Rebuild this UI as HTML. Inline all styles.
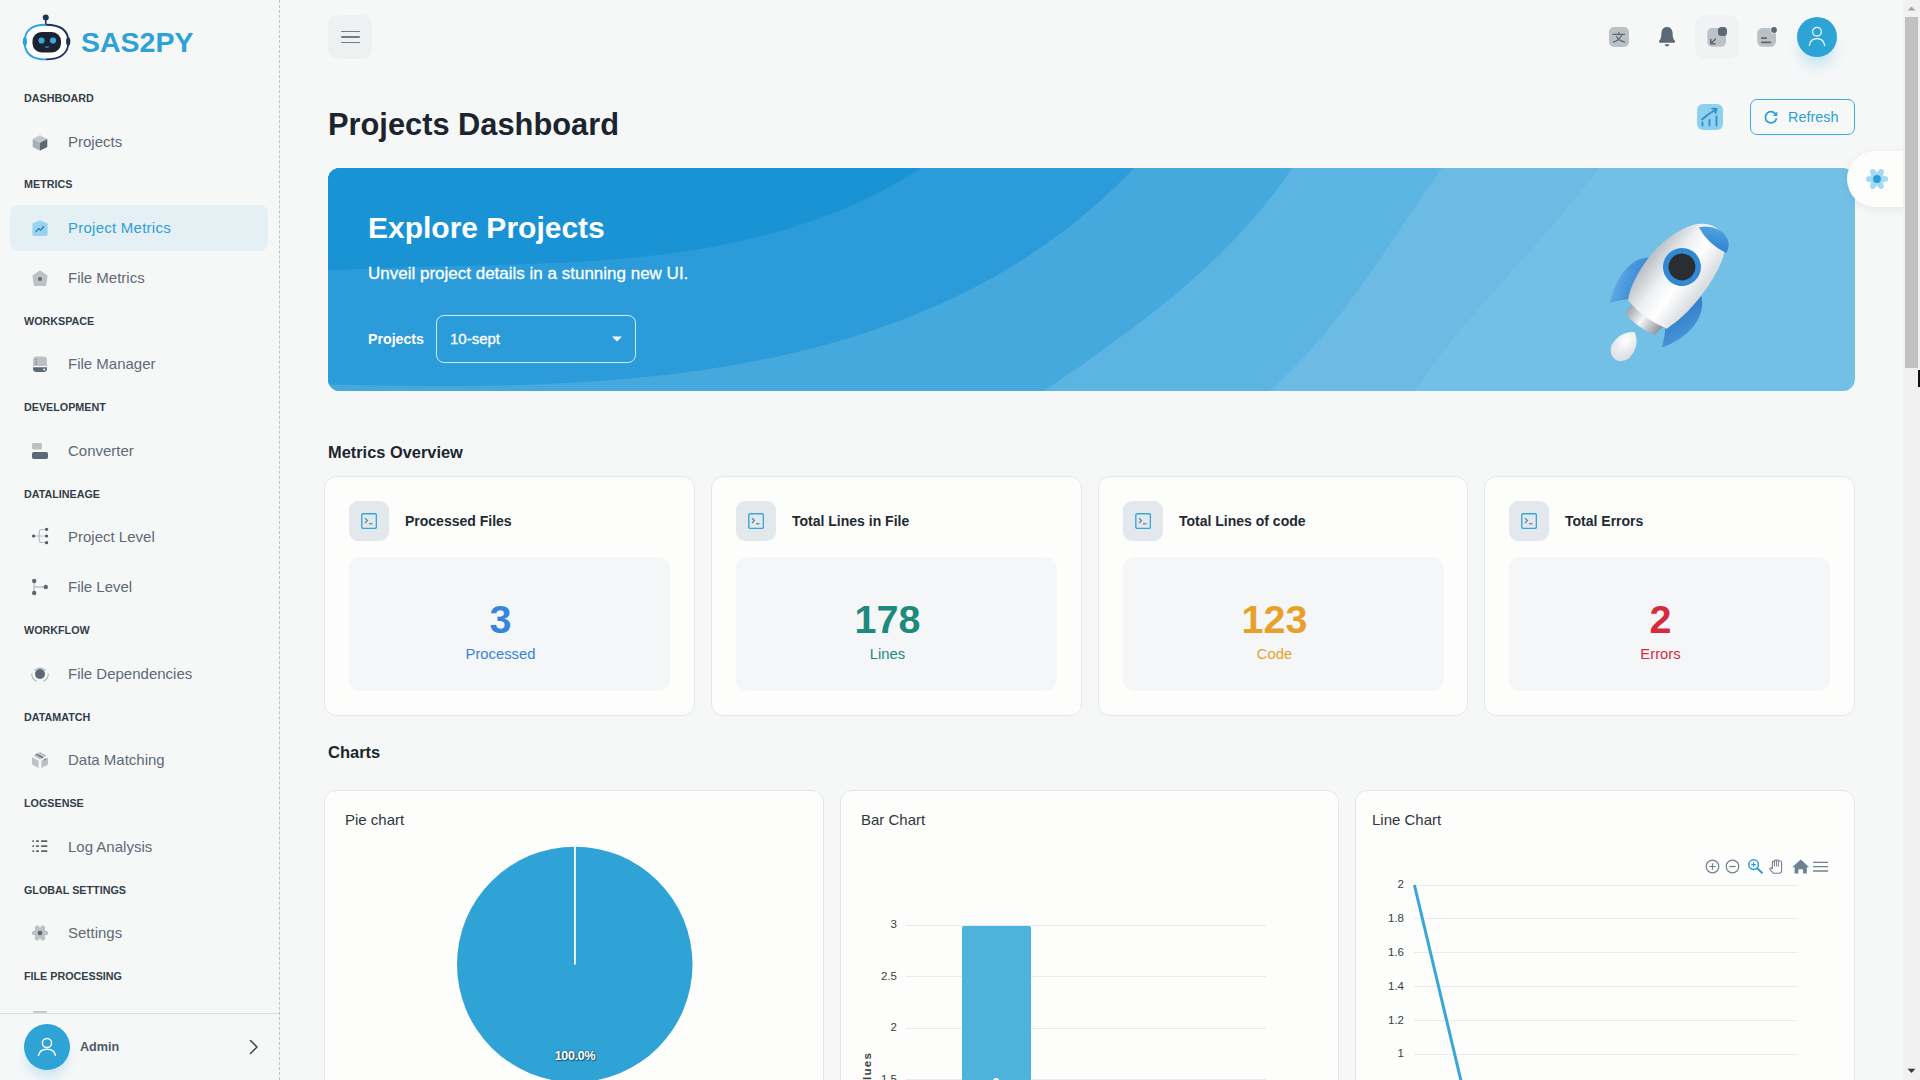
<!DOCTYPE html><html><head><meta charset="utf-8"><style>
html,body{margin:0;padding:0;width:1920px;height:1080px;overflow:hidden;background:#f6f8f8;}
body{position:relative;font-family:"Liberation Sans", sans-serif;}
.t{position:absolute;white-space:nowrap;font-family:"Liberation Sans", sans-serif;}
svg{display:block;}
</style></head><body>
<div style="position:absolute;left:0px;top:0px;width:279px;height:1080px;background:#f6f8f8;"></div>
<svg style="position:absolute;left:279px;top:0px;" width="1" height="1080" viewBox="0 0 1 1080"><line x1="0.5" y1="0" x2="0.5" y2="1080" stroke="#bfc3c6" stroke-width="1" stroke-dasharray="3 2.00930"/></svg>
<svg style="position:absolute;left:22px;top:12px;" width="50" height="52" viewBox="0 0 50 52">
<circle cx="23.75" cy="5.5" r="3" fill="#1d3358"/>
<rect x="23" y="6" width="1.5" height="7" fill="#1d3358"/>
<path d="M23.75 12.8 C 10 12.8 2.6 18 2.6 30 C 2.6 42 10 47.4 23.75 47.4 C 37.5 47.4 46.4 42 46.4 30 C 46.4 18 37.5 12.8 23.75 12.8 Z" fill="#ffffff"/>
<path d="M23.75 12.8 C 10 12.8 2.6 18 2.6 30 C 2.6 42 10 47.4 23.75 47.4" fill="none" stroke="#2aa3e0" stroke-width="1.9"/>
<path d="M23.75 12.8 C 37.5 12.8 46.4 18 46.4 30 C 46.4 42 37.5 47.4 23.75 47.4" fill="none" stroke="#1d3358" stroke-width="1.9"/>
<ellipse cx="2.9" cy="29.5" rx="2.1" ry="4.2" fill="#2aa3e0"/>
<ellipse cx="46.2" cy="29.5" rx="2.1" ry="4.2" fill="#1d3358"/>
<rect x="10.5" y="20" width="28.5" height="20.5" rx="9" fill="#1c2330"/>
<circle cx="19.5" cy="28.5" r="3.1" fill="#38a8e0"/>
<circle cx="31" cy="28.5" r="3.1" fill="#38a8e0"/>
<path d="M22.5 34.6 Q25 37 27.5 34.6 Z" fill="#38a8e0"/>
</svg>
<div class="t" style="left:81px;top:28.28px;font-size:28.5px;line-height:28.5px;color:#2ea1d6;font-weight:700;letter-spacing:0px;">SAS2PY</div>
<div class="t" style="left:24px;top:92.86px;font-size:10.75px;line-height:10.75px;color:#343e48;font-weight:700;">DASHBOARD</div>
<div class="t" style="left:24px;top:178.86px;font-size:10.75px;line-height:10.75px;color:#343e48;font-weight:700;">METRICS</div>
<div class="t" style="left:24px;top:315.86px;font-size:10.75px;line-height:10.75px;color:#343e48;font-weight:700;">WORKSPACE</div>
<div class="t" style="left:24px;top:401.86px;font-size:10.75px;line-height:10.75px;color:#343e48;font-weight:700;">DEVELOPMENT</div>
<div class="t" style="left:24px;top:488.86px;font-size:10.75px;line-height:10.75px;color:#343e48;font-weight:700;">DATALINEAGE</div>
<div class="t" style="left:24px;top:624.86px;font-size:10.75px;line-height:10.75px;color:#343e48;font-weight:700;">WORKFLOW</div>
<div class="t" style="left:24px;top:711.86px;font-size:10.75px;line-height:10.75px;color:#343e48;font-weight:700;">DATAMATCH</div>
<div class="t" style="left:24px;top:797.86px;font-size:10.75px;line-height:10.75px;color:#343e48;font-weight:700;">LOGSENSE</div>
<div class="t" style="left:24px;top:884.86px;font-size:10.75px;line-height:10.75px;color:#343e48;font-weight:700;">GLOBAL SETTINGS</div>
<div class="t" style="left:24px;top:970.86px;font-size:10.75px;line-height:10.75px;color:#343e48;font-weight:700;">FILE PROCESSING</div>
<div style="position:absolute;left:10px;top:205px;width:258px;height:46px;background:#e5f0f4;border-radius:8px;"></div>
<div class="t" style="left:68px;top:134.25px;font-size:15px;line-height:15px;color:#5e6a75;font-weight:400;">Projects</div>
<svg style="position:absolute;left:32px;top:134px;overflow:visible;" width="16" height="16" viewBox="0 0 16 16"><path d="M8 1.3 L15.3 5 L8 8.8 L0.7 5 Z" fill="#c3c7cb"/><path d="M0.7 5 L8 8.8 L8 16.7 L0.7 13 Z" fill="#a9aeb4"/><path d="M15.3 5 L8 8.8 L8 16.7 L15.3 13 Z" fill="#5b6976"/></svg>
<div class="t" style="left:68px;top:220.25px;font-size:15px;line-height:15px;color:#2e9fd4;font-weight:400;letter-spacing:0.25px;">Project Metrics</div>
<svg style="position:absolute;left:32px;top:220px;overflow:visible;" width="16" height="16" viewBox="0 0 16 16"><path d="M8 0.2 L15.6 3.5 L15.6 14 Q15.6 16 13.6 16 L2.4 16 Q0.4 16 0.4 14 L0.4 3.5 Z" fill="#9bd3ee"/><path d="M4 11.5 L6.6 8.6 L8.5 10.3 L11.5 7" fill="none" stroke="#2a86bf" stroke-width="1.4" stroke-linecap="round" stroke-linejoin="round"/><path d="M10 6.6 L12.2 6.4 L12 8.6 Z" fill="#2a86bf"/></svg>
<div class="t" style="left:68px;top:270.25px;font-size:15px;line-height:15px;color:#5e6a75;font-weight:400;">File Metrics</div>
<svg style="position:absolute;left:32px;top:270px;overflow:visible;" width="16" height="16" viewBox="0 0 16 16"><path d="M8 0.3 L15.6 5.5 L14.2 15.3 Q14 16 13.2 16 L2.8 16 Q2 16 1.8 15.3 L0.4 5.5 Z" fill="#bcc1c6"/><circle cx="8" cy="9" r="2" fill="#5b6976"/></svg>
<div class="t" style="left:68px;top:356.25px;font-size:15px;line-height:15px;color:#5e6a75;font-weight:400;">File Manager</div>
<svg style="position:absolute;left:32px;top:356px;overflow:visible;" width="16" height="16" viewBox="0 0 16 16"><path d="M1 4 Q1 0.5 4.5 0.5 L11.5 0.5 Q15 0.5 15 4 L15 10 L1 10 Z" fill="#bcc1c6"/><path d="M1 11.3 L15 11.3 L15 12.5 Q15 16 11.5 16 L4.5 16 Q1 16 1 12.5 Z" fill="#5b6976"/><circle cx="12.2" cy="13.6" r="1" fill="#f5f7f7"/><rect x="3.5" y="3.2" width="1.2" height="1" fill="#5b6976"/><rect x="3.5" y="5.2" width="1.2" height="1" fill="#5b6976"/><rect x="3.5" y="7.2" width="1.2" height="1" fill="#5b6976"/></svg>
<div class="t" style="left:68px;top:443.25px;font-size:15px;line-height:15px;color:#5e6a75;font-weight:400;">Converter</div>
<svg style="position:absolute;left:32px;top:443px;overflow:visible;" width="16" height="16" viewBox="0 0 16 16"><rect x="0" y="0" width="10" height="6.5" rx="1.6" fill="#bcc1c6"/><rect x="0" y="9" width="16" height="7" rx="1.8" fill="#5b6976"/></svg>
<div class="t" style="left:68px;top:529.25px;font-size:15px;line-height:15px;color:#5e6a75;font-weight:400;">Project Level</div>
<svg style="position:absolute;left:32px;top:529px;overflow:visible;" width="16" height="16" viewBox="0 0 16 16"><path d="M1.5 7 L14.5 7 M14.5 0.5 L9.5 0.5 Q7.3 0.5 7.3 2.7 L7.3 11.3 Q7.3 13.5 9.5 13.5 L14.5 13.5" fill="none" stroke="#b9bec3" stroke-width="1.2"/><circle cx="1.6" cy="7" r="1.6" fill="#4b5966"/><circle cx="14.6" cy="0.3" r="1.6" fill="#4b5966"/><circle cx="14.6" cy="7" r="1.6" fill="#4b5966"/><circle cx="14.6" cy="13.7" r="1.6" fill="#4b5966"/></svg>
<div class="t" style="left:68px;top:579.25px;font-size:15px;line-height:15px;color:#5e6a75;font-weight:400;">File Level</div>
<svg style="position:absolute;left:32px;top:579px;overflow:visible;" width="16" height="16" viewBox="0 0 16 16"><path d="M2 2 L2 14 M2 8 L13.8 8" fill="none" stroke="#b9bec3" stroke-width="1.3"/><circle cx="2.2" cy="2" r="2.2" fill="#5b6976"/><circle cx="2.2" cy="14" r="2.2" fill="#5b6976"/><circle cx="13.8" cy="8" r="2.2" fill="#5b6976"/></svg>
<div class="t" style="left:68px;top:666.25px;font-size:15px;line-height:15px;color:#5e6a75;font-weight:400;">File Dependencies</div>
<svg style="position:absolute;left:32px;top:666px;overflow:visible;" width="16" height="16" viewBox="0 0 16 16"><circle cx="8" cy="8" r="5" fill="#5b6976"/><path d="M2.3 4.5 A8 8 0 0 1 13.7 4.5" fill="none" stroke="#b3b8bd" stroke-width="1.1"/><path d="M-0.3 7.5 A8.3 8.3 0 0 0 4.8 15.4" fill="none" stroke="#b3b8bd" stroke-width="1.1"/><path d="M16.3 7.5 A8.3 8.3 0 0 1 11.2 15.4" fill="none" stroke="#b3b8bd" stroke-width="1.1"/></svg>
<div class="t" style="left:68px;top:752.25px;font-size:15px;line-height:15px;color:#5e6a75;font-weight:400;">Data Matching</div>
<svg style="position:absolute;left:32px;top:752px;overflow:visible;" width="16" height="16" viewBox="0 0 16 16"><path d="M8 0 L14.6 3.6 L8 7.4 L1.4 3.6 Z" fill="#bcc1c6"/><path d="M4 2 L11.2 6" stroke="#5b6976" stroke-width="1.3"/><path d="M0 5.2 L6.6 8.8 L6.6 16 L0 12.4 Z" fill="#bcc1c6"/><path d="M16 5.2 L9.4 8.8 L9.4 16 L16 12.4 Z" fill="#bcc1c6"/><path d="M12 7.2 L13.6 6.3 L13.6 7.8 L12 8.7Z" fill="#5b6976"/></svg>
<div class="t" style="left:68px;top:839.25px;font-size:15px;line-height:15px;color:#5e6a75;font-weight:400;">Log Analysis</div>
<svg style="position:absolute;left:32px;top:839px;overflow:visible;" width="16" height="16" viewBox="0 0 16 16"><g fill="#5e6368"><rect x="0.3" y="1.2" width="1.8" height="1.8" rx="0.5"/><rect x="4" y="1.2" width="3" height="1.8" rx="0.5"/><rect x="9" y="1.2" width="6.4" height="1.8" rx="0.5"/><rect x="0.3" y="6.2" width="1.8" height="1.8" rx="0.5"/><rect x="4" y="6.2" width="3" height="1.8" rx="0.5"/><rect x="9" y="6.2" width="6.4" height="1.8" rx="0.5"/><rect x="0.3" y="11.2" width="1.8" height="1.8" rx="0.5"/><rect x="4" y="11.2" width="3" height="1.8" rx="0.5"/><rect x="9" y="11.2" width="6.4" height="1.8" rx="0.5"/></g></svg>
<div class="t" style="left:68px;top:925.25px;font-size:15px;line-height:15px;color:#5e6a75;font-weight:400;">Settings</div>
<svg style="position:absolute;left:32px;top:925px;overflow:visible;" width="16" height="16" viewBox="0 0 16 16"><circle cx="8" cy="8" r="5.7" fill="#bcc1c6"/><rect x="-0.1999999999999993" y="5.65" width="16.4" height="4.7" rx="2.1363636363636362" fill="#bcc1c6" transform="rotate(0 8 8)"/><rect x="-0.1999999999999993" y="5.65" width="16.4" height="4.7" rx="2.1363636363636362" fill="#bcc1c6" transform="rotate(60 8 8)"/><rect x="-0.1999999999999993" y="5.65" width="16.4" height="4.7" rx="2.1363636363636362" fill="#bcc1c6" transform="rotate(120 8 8)"/><circle cx="8" cy="8" r="2.3" fill="#5b6976"/></svg>
<div style="position:absolute;left:33px;top:1011px;width:14px;height:1.5px;background:#c9cdd0;"></div>
<div style="position:absolute;left:0px;top:1012.5px;width:279px;height:68px;background:#f6f8f8;border-top:1.5px solid #dde0e2;"></div>
<div style="position:absolute;left:24px;top:1024px;width:46px;height:46px;background:#2ea3d6;border-radius:50%;box-shadow:0 10px 14px -4px rgba(46,163,214,0.28);"></div>
<svg style="position:absolute;left:24px;top:1024px;" width="46" height="46" viewBox="0 0 46 46"><circle cx="23" cy="19" r="4.6" fill="none" stroke="#fff" stroke-width="1.5"/><path d="M14.5 31.5 Q15.5 25.2 23 25.2 Q30.5 25.2 31.5 31.5" fill="none" stroke="#fff" stroke-width="1.5" stroke-linecap="round"/></svg>
<div class="t" style="left:80px;top:1040.79px;font-size:12.6px;line-height:12.6px;color:#4f5a64;font-weight:700;">Admin</div>
<svg style="position:absolute;left:248px;top:1039px;" width="12" height="16" viewBox="0 0 12 16"><path d="M2.5 1.5 L9 8 L2.5 14.5" fill="none" stroke="#39424b" stroke-width="1.5" stroke-linecap="round" stroke-linejoin="round"/></svg>
<div style="position:absolute;left:328px;top:15px;width:44px;height:44px;background:#eef1f2;border-radius:9px;"></div>
<div style="position:absolute;left:340.5px;top:30.6px;width:19px;height:1.4px;background:#6e7e88;border-radius:1px;"></div>
<div style="position:absolute;left:340.5px;top:36.3px;width:19px;height:1.4px;background:#6e7e88;border-radius:1px;"></div>
<div style="position:absolute;left:340.5px;top:42.0px;width:19px;height:1.4px;background:#6e7e88;border-radius:1px;"></div>
<div style="position:absolute;left:1609px;top:27px;width:20px;height:20px;background:#bcc1c6;border-radius:5px;"></div>
<svg style="position:absolute;left:1609px;top:27px;" width="20" height="20" viewBox="0 0 20 20"><path d="M4 7.3 L15.6 7.3 M9.8 5.3 L9.8 7.3 M12.8 7.6 Q11 13.2 4.2 15.1 M7.6 9.6 Q10 13.6 15.6 15.1" fill="none" stroke="#5b6876" stroke-width="1.3" stroke-linecap="round"/></svg>
<svg style="position:absolute;left:1658px;top:26px;" width="18" height="22" viewBox="0 0 18 22"><path d="M9 1 Q4.5 1 3.5 6 L3.2 10.5 Q3 13 1 15 Q0.5 16.4 2 16.8 L16 16.8 Q17.5 16.4 17 15 Q15 13 14.8 10.5 L14.5 6 Q13.5 1 9 1 Z" fill="#5b6876"/><path d="M6.5 18.3 L11.5 18.3 Q10.5 20.6 9 20.6 Q7.5 20.6 6.5 18.3Z" fill="#5b6876"/></svg>
<div style="position:absolute;left:1695px;top:15px;width:44px;height:44px;background:#f0f2f3;border-radius:10px;"></div>
<svg style="position:absolute;left:1707px;top:27px;" width="21" height="21" viewBox="0 0 21 21"><rect x="0.3" y="1" width="18.7" height="18.7" rx="5" fill="#bcc1c6"/><rect x="11" y="0" width="9" height="9" rx="3.5" fill="#5b6876"/><path d="M8.3 12.2 L4 16.5 M3.8 12.5 L3.8 16.7 L8 16.7" fill="none" stroke="#5b6876" stroke-width="1.6" stroke-linecap="round" stroke-linejoin="round"/></svg>
<svg style="position:absolute;left:1757px;top:27px;" width="22" height="21" viewBox="0 0 22 21"><rect x="0.2" y="1" width="18.8" height="18.8" rx="5.5" fill="#bcc1c6"/><circle cx="17" cy="3" r="3.6" fill="#f5f7f7"/><circle cx="17" cy="3" r="2.9" fill="#5b6876"/><rect x="4" y="10.3" width="6" height="1.7" rx="0.8" fill="#5b6876"/><rect x="4" y="14.5" width="10.3" height="1.7" rx="0.8" fill="#5b6876"/></svg>
<div style="position:absolute;left:1797px;top:17px;width:40px;height:40px;background:#2ea3d6;border-radius:50%;box-shadow:0 12px 16px -4px rgba(46,163,214,0.28);"></div>
<svg style="position:absolute;left:1797px;top:17px;" width="40" height="40" viewBox="0 0 40 40"><circle cx="20" cy="14.8" r="4.4" fill="none" stroke="#fff" stroke-width="1.2"/><path d="M12.4 28.5 Q13.4 21.6 20 21.6 Q26.6 21.6 27.6 28.5" fill="none" stroke="#fff" stroke-width="1.2" stroke-linecap="round"/></svg>
<div class="t" style="left:328px;top:109.82px;font-size:30.8px;line-height:30.8px;color:#1c252e;font-weight:700;">Projects Dashboard</div>
<div style="position:absolute;left:1697px;top:104px;width:26px;height:26px;background:#8fd0ee;border-radius:6px;"></div>
<svg style="position:absolute;left:1697px;top:104px;" width="26" height="26" viewBox="0 0 26 26"><path d="M5 15.5 Q11 10 19 5.5" fill="none" stroke="#2a8fcb" stroke-width="1.8" stroke-linecap="round"/><path d="M15.2 4.6 L19.6 4.8 L18.4 9" fill="none" stroke="#2a8fcb" stroke-width="1.8" stroke-linecap="round" stroke-linejoin="round"/><path d="M5.5 18.5 L5.5 21.5 M12.5 16 L12.5 21.5 M19.5 12.5 L19.5 21.5" fill="none" stroke="#2a8fcb" stroke-width="1.8" stroke-linecap="round"/></svg>
<div style="position:absolute;left:1750px;top:99px;width:105px;height:36px;box-sizing:border-box;border:1.2px solid #36ade0;border-radius:7px;background:transparent;"></div>
<svg style="position:absolute;left:1763px;top:109px;" width="16" height="16" viewBox="0 0 16 16"><path d="M13.2 6.2 A5.6 5.6 0 1 0 13.4 9.8" fill="none" stroke="#2e9fd4" stroke-width="1.7" stroke-linecap="round"/><path d="M14.3 2.6 L14.3 7 L9.9 7 Z" fill="#2e9fd4"/></svg>
<div class="t" style="left:1788px;top:109.76px;font-size:14.4px;line-height:14.4px;color:#2e9fd4;font-weight:400;">Refresh</div>
<div style="position:absolute;left:328px;top:168px;width:1527px;height:223px;border-radius:12px;overflow:hidden;"><svg width="1527" height="223" viewBox="0 0 1527 223" style="position:absolute;left:0;top:0">
<rect x="0" y="0" width="1527" height="223" fill="#73c0e6"/>
<path d="M0 0 L1271.0 0 L1271.0 0.0 C1213.8 77.5, 1140.7 142.2, 1087.0 223.0 L0 223 Z" fill="#6bbbe5"/>
<path d="M0 0 L1114.0 0 L1114.0 0.0 C1059.0 76.7, 1013.1 160.3, 941.0 223.0 L0 223 Z" fill="#5cb4e2"/>
<path d="M0 0 L964.0 0 L964.0 0.0 C901.1 94.7, 808.1 159.8, 716.0 223.0 L0 223 Z" fill="#45a9de"/>
<path d="M0 0 L806.0 0 L806.0 0.0 C598.6 217.8, 278.9 223.5, 0.0 216.3 L0 216.3 Z" fill="#2b9bd9"/>
<path d="M0 0 L593.0 0 L593.0 0.0 C415.9 114.8, 199.5 90.1, 0.0 102.6 Z" fill="#1993d4"/>
</svg></div>
<div class="t" style="left:368px;top:212.90px;font-size:30px;line-height:30px;color:#ffffff;font-weight:700;">Explore Projects</div>
<div class="t" style="left:368px;top:265.25px;font-size:17px;line-height:17px;color:#ffffff;font-weight:400;-webkit-text-stroke:0.3px #ffffff;">Unveil project details in a stunning new UI.</div>
<div class="t" style="left:368px;top:331.93px;font-size:14.2px;line-height:14.2px;color:#ffffff;font-weight:700;">Projects</div>
<div style="position:absolute;left:436px;top:315px;width:200px;height:48px;box-sizing:border-box;border:1px solid rgba(255,255,255,0.78);border-radius:8px;"></div>
<div class="t" style="left:450px;top:331.25px;font-size:15px;line-height:15px;color:#ffffff;font-weight:400;-webkit-text-stroke:0.3px #ffffff;">10-sept</div>
<svg style="position:absolute;left:611px;top:335px;" width="12" height="8" viewBox="0 0 12 8"><path d="M1 1.5 L11 1.5 L6 6.5 Z" fill="#ffffff"/></svg>
<svg style="position:absolute;left:1598px;top:212px;" width="136" height="160" viewBox="0 0 136 160">
<defs>
<linearGradient id="rb" x1="0" y1="0" x2="1" y2="0"><stop offset="0" stop-color="#b9bfc5"/><stop offset="0.35" stop-color="#eef0f2"/><stop offset="0.6" stop-color="#ffffff"/><stop offset="1" stop-color="#d5dadd"/></linearGradient>
<linearGradient id="finL" x1="1" y1="0" x2="0" y2="1"><stop offset="0" stop-color="#2f7fcf"/><stop offset="0.6" stop-color="#4a98dc"/><stop offset="1" stop-color="#6ab0e6"/></linearGradient>
<linearGradient id="finR" x1="0" y1="0" x2="1" y2="1"><stop offset="0" stop-color="#2a74c4"/><stop offset="1" stop-color="#4d9bdc"/></linearGradient>
<linearGradient id="noz" x1="0" y1="0" x2="1" y2="0"><stop offset="0" stop-color="#9ba2a8"/><stop offset="0.45" stop-color="#f4f5f6"/><stop offset="1" stop-color="#868d93"/></linearGradient>
<linearGradient id="cap" x1="0" y1="0" x2="1" y2="1"><stop offset="0" stop-color="#5aa9e6"/><stop offset="1" stop-color="#2d82cf"/></linearGradient>
<radialGradient id="fl" cx="0.4" cy="0.35" r="0.7"><stop offset="0" stop-color="#ffffff"/><stop offset="1" stop-color="#d8dde1"/></radialGradient>
</defs>
<g transform="translate(75.5,66.6) rotate(36) scale(1.2)">
 <path d="M-22 -5 Q-37 2 -37 22 Q-36 36 -31 48 Q-25 39 -16 33 Z" fill="url(#finL)"/>
 <path d="M22 -5 Q37 2 37 22 Q36 38 26 52 Q22 42 17 34 Z" fill="url(#finR)"/>
 <path d="M-16 33 L17 33 L15 47 Q0 51 -15 47 Z" fill="url(#noz)"/>
 <path d="M4 -55 Q-10 -54 -18 -38 Q-27 -20 -27 0 Q-27 24 -20 37 Q0 42 20 37 Q28 16 27 -12 Q26 -38 18 -49 Q12 -56 4 -55 Z" fill="url(#rb)"/>
 <path d="M6 -55 Q-2 -54 -8 -47 Q6 -40 23 -43 Q22 -52 15 -54 Q10 -56 6 -55 Z" fill="url(#cap)"/>
 <circle cx="0" cy="-12" r="15.8" fill="#3189d3"/>
 <circle cx="0" cy="-12" r="11.2" fill="#2a2e32"/>
 <path d="M0 55 Q-11 62 -9 76 Q-6 83 0 83 Q6 83 9 76 Q11 62 0 55 Z" fill="url(#fl)"/>
</g></svg>
<div class="t" style="left:328px;top:443.86px;font-size:16.4px;line-height:16.4px;color:#1c252e;font-weight:700;">Metrics Overview</div>
<div style="position:absolute;left:324px;top:476px;width:371px;height:240px;box-sizing:border-box;border:1px solid #e4e7e9;border-radius:12px;background:#fdfdfb;"></div>
<div style="position:absolute;left:348.5px;top:501px;width:40px;height:40px;background:#e2e8eb;border-radius:9px;"></div>
<svg style="position:absolute;left:360.5px;top:513px;" width="16" height="16" viewBox="0 0 16 16"><rect x="0.8" y="0.8" width="14.6" height="14.6" rx="1.4" fill="none" stroke="#3aa6d8" stroke-width="1.4"/><path d="M4 5.2 L6.4 7.6 L4 10" fill="none" stroke="#3b7fa3" stroke-width="1.1"/><path d="M8 10.8 L11.5 10.8" stroke="#3b7fa3" stroke-width="1.1"/></svg>
<div class="t" style="left:405px;top:514.10px;font-size:14px;line-height:14px;color:#1f2a33;font-weight:700;">Processed Files</div>
<div style="position:absolute;left:348.5px;top:557px;width:321px;height:134px;background:#f4f6f8;border-radius:12px;"></div>
<div class="t" style="left:200.5px;width:600px;text-align:center;top:600.22px;font-size:39.5px;line-height:39.5px;color:#3784dc;font-weight:700;">3</div>
<div class="t" style="left:200.5px;width:600px;text-align:center;top:647.02px;font-size:14.8px;line-height:14.8px;color:#3784dc;font-weight:400;">Processed</div>
<div style="position:absolute;left:711px;top:476px;width:371px;height:240px;box-sizing:border-box;border:1px solid #e4e7e9;border-radius:12px;background:#fdfdfb;"></div>
<div style="position:absolute;left:735.5px;top:501px;width:40px;height:40px;background:#e2e8eb;border-radius:9px;"></div>
<svg style="position:absolute;left:747.5px;top:513px;" width="16" height="16" viewBox="0 0 16 16"><rect x="0.8" y="0.8" width="14.6" height="14.6" rx="1.4" fill="none" stroke="#3aa6d8" stroke-width="1.4"/><path d="M4 5.2 L6.4 7.6 L4 10" fill="none" stroke="#3b7fa3" stroke-width="1.1"/><path d="M8 10.8 L11.5 10.8" stroke="#3b7fa3" stroke-width="1.1"/></svg>
<div class="t" style="left:792px;top:514.10px;font-size:14px;line-height:14px;color:#1f2a33;font-weight:700;">Total Lines in File</div>
<div style="position:absolute;left:735.5px;top:557px;width:321px;height:134px;background:#f4f6f8;border-radius:12px;"></div>
<div class="t" style="left:587.5px;width:600px;text-align:center;top:600.22px;font-size:39.5px;line-height:39.5px;color:#1d8a7c;font-weight:700;">178</div>
<div class="t" style="left:587.5px;width:600px;text-align:center;top:647.02px;font-size:14.8px;line-height:14.8px;color:#1d8a7c;font-weight:400;">Lines</div>
<div style="position:absolute;left:1098px;top:476px;width:370px;height:240px;box-sizing:border-box;border:1px solid #e4e7e9;border-radius:12px;background:#fdfdfb;"></div>
<div style="position:absolute;left:1122.5px;top:501px;width:40px;height:40px;background:#e2e8eb;border-radius:9px;"></div>
<svg style="position:absolute;left:1134.5px;top:513px;" width="16" height="16" viewBox="0 0 16 16"><rect x="0.8" y="0.8" width="14.6" height="14.6" rx="1.4" fill="none" stroke="#3aa6d8" stroke-width="1.4"/><path d="M4 5.2 L6.4 7.6 L4 10" fill="none" stroke="#3b7fa3" stroke-width="1.1"/><path d="M8 10.8 L11.5 10.8" stroke="#3b7fa3" stroke-width="1.1"/></svg>
<div class="t" style="left:1179px;top:514.10px;font-size:14px;line-height:14px;color:#1f2a33;font-weight:700;">Total Lines of code</div>
<div style="position:absolute;left:1122.5px;top:557px;width:321px;height:134px;background:#f4f6f8;border-radius:12px;"></div>
<div class="t" style="left:974.5px;width:600px;text-align:center;top:600.22px;font-size:39.5px;line-height:39.5px;color:#e6a12b;font-weight:700;">123</div>
<div class="t" style="left:974.5px;width:600px;text-align:center;top:647.02px;font-size:14.8px;line-height:14.8px;color:#e6a12b;font-weight:400;">Code</div>
<div style="position:absolute;left:1484px;top:476px;width:371px;height:240px;box-sizing:border-box;border:1px solid #e4e7e9;border-radius:12px;background:#fdfdfb;"></div>
<div style="position:absolute;left:1508.5px;top:501px;width:40px;height:40px;background:#e2e8eb;border-radius:9px;"></div>
<svg style="position:absolute;left:1520.5px;top:513px;" width="16" height="16" viewBox="0 0 16 16"><rect x="0.8" y="0.8" width="14.6" height="14.6" rx="1.4" fill="none" stroke="#3aa6d8" stroke-width="1.4"/><path d="M4 5.2 L6.4 7.6 L4 10" fill="none" stroke="#3b7fa3" stroke-width="1.1"/><path d="M8 10.8 L11.5 10.8" stroke="#3b7fa3" stroke-width="1.1"/></svg>
<div class="t" style="left:1565px;top:514.10px;font-size:14px;line-height:14px;color:#1f2a33;font-weight:700;">Total Errors</div>
<div style="position:absolute;left:1508.5px;top:557px;width:321px;height:134px;background:#f4f6f8;border-radius:12px;"></div>
<div class="t" style="left:1360.5px;width:600px;text-align:center;top:600.22px;font-size:39.5px;line-height:39.5px;color:#d82a3e;font-weight:700;">2</div>
<div class="t" style="left:1360.5px;width:600px;text-align:center;top:647.02px;font-size:14.8px;line-height:14.8px;color:#d82a3e;font-weight:400;">Errors</div>
<div class="t" style="left:328px;top:743.68px;font-size:16.5px;line-height:16.5px;color:#1c252e;font-weight:700;">Charts</div>
<div style="position:absolute;left:324px;top:790px;width:500px;height:400px;box-sizing:border-box;border:1px solid #e4e7e9;border-radius:12px;background:#fdfdfb;"></div>
<div style="position:absolute;left:840px;top:790px;width:499px;height:400px;box-sizing:border-box;border:1px solid #e4e7e9;border-radius:12px;background:#fdfdfb;"></div>
<div style="position:absolute;left:1355px;top:790px;width:500px;height:400px;box-sizing:border-box;border:1px solid #e4e7e9;border-radius:12px;background:#fdfdfb;"></div>
<div class="t" style="left:345px;top:811.95px;font-size:15px;line-height:15px;color:#2e3740;font-weight:400;">Pie chart</div>
<div class="t" style="left:861px;top:811.95px;font-size:15px;line-height:15px;color:#2e3740;font-weight:400;">Bar Chart</div>
<div class="t" style="left:1372px;top:811.95px;font-size:15px;line-height:15px;color:#2e3740;font-weight:400;">Line Chart</div>
<svg style="position:absolute;left:440px;top:830px;overflow:hidden;" width="270" height="250" viewBox="0 0 270 250"><circle cx="134.75" cy="134.4" r="117.75" fill="#2fa3d6"/><rect x="134" y="16" width="1.8" height="118.5" fill="#ffffff"/></svg>
<div class="t" style="left:275px;width:600px;text-align:center;top:1049.67px;font-size:12.5px;line-height:12.5px;color:#ffffff;font-weight:700;text-shadow:0 0 2px rgba(0,0,0,0.55),1px 1px 1px rgba(0,0,0,0.4);letter-spacing:-0.3px;">100.0%</div>
<div style="position:absolute;left:906px;top:924.5px;width:360px;height:1px;background:#e7eaec;"></div>
<div class="t" style="left:597px;width:300px;text-align:right;top:919.33px;font-size:11.5px;line-height:11.5px;color:#373d3f;font-weight:400;">3</div>
<div style="position:absolute;left:906px;top:976.0px;width:360px;height:1px;background:#e7eaec;"></div>
<div class="t" style="left:597px;width:300px;text-align:right;top:970.83px;font-size:11.5px;line-height:11.5px;color:#373d3f;font-weight:400;">2.5</div>
<div style="position:absolute;left:906px;top:1027.5px;width:360px;height:1px;background:#e7eaec;"></div>
<div class="t" style="left:597px;width:300px;text-align:right;top:1022.32px;font-size:11.5px;line-height:11.5px;color:#373d3f;font-weight:400;">2</div>
<div style="position:absolute;left:906px;top:1079.0px;width:360px;height:1px;background:#e7eaec;"></div>
<div class="t" style="left:597px;width:300px;text-align:right;top:1073.82px;font-size:11.5px;line-height:11.5px;color:#373d3f;font-weight:400;">1.5</div>
<div style="position:absolute;left:961.5px;top:926px;width:69.5px;height:160px;background:#4db3dd;border-radius:2px 2px 0 0;"></div>
<div class="t" style="left:817px;top:1068px;width:100px;text-align:center;font-size:11.5px;line-height:12px;font-weight:700;letter-spacing:1.3px;color:#373d3f;transform:rotate(-90deg);transform-origin:50% 50%;">Values</div>
<div class="t" style="left:696px;width:600px;text-align:center;top:1076.80px;font-size:12px;line-height:12px;color:#ffffff;font-weight:700;">3</div>
<div style="position:absolute;left:1414px;top:884.5px;width:383px;height:1px;background:#e7eaec;"></div>
<div class="t" style="left:1104px;width:300px;text-align:right;top:879.33px;font-size:11.5px;line-height:11.5px;color:#373d3f;font-weight:400;">2</div>
<div style="position:absolute;left:1414px;top:918.4px;width:383px;height:1px;background:#e7eaec;"></div>
<div class="t" style="left:1104px;width:300px;text-align:right;top:913.23px;font-size:11.5px;line-height:11.5px;color:#373d3f;font-weight:400;">1.8</div>
<div style="position:absolute;left:1414px;top:952.2px;width:383px;height:1px;background:#e7eaec;"></div>
<div class="t" style="left:1104px;width:300px;text-align:right;top:947.03px;font-size:11.5px;line-height:11.5px;color:#373d3f;font-weight:400;">1.6</div>
<div style="position:absolute;left:1414px;top:986.0px;width:383px;height:1px;background:#e7eaec;"></div>
<div class="t" style="left:1104px;width:300px;text-align:right;top:980.83px;font-size:11.5px;line-height:11.5px;color:#373d3f;font-weight:400;">1.4</div>
<div style="position:absolute;left:1414px;top:1019.8px;width:383px;height:1px;background:#e7eaec;"></div>
<div class="t" style="left:1104px;width:300px;text-align:right;top:1014.62px;font-size:11.5px;line-height:11.5px;color:#373d3f;font-weight:400;">1.2</div>
<div style="position:absolute;left:1414px;top:1053.6px;width:383px;height:1px;background:#e7eaec;"></div>
<div class="t" style="left:1104px;width:300px;text-align:right;top:1048.42px;font-size:11.5px;line-height:11.5px;color:#373d3f;font-weight:400;">1</div>
<svg style="position:absolute;left:1400px;top:870px;" width="80" height="210" viewBox="0 0 80 210"><path d="M14.4 15 L62 215" fill="none" stroke="#38a7d8" stroke-width="3" stroke-linecap="butt"/></svg>
<svg style="position:absolute;left:1705px;top:859px;" width="130" height="17" viewBox="0 0 130 17">
<g fill="none" stroke="#6e8192" stroke-width="1.2">
<circle cx="7.5" cy="7.5" r="6.3"/><path d="M7.5 4.3 L7.5 10.7 M4.3 7.5 L10.7 7.5"/>
<circle cx="27.5" cy="7.5" r="6.3"/><path d="M24.3 7.5 L30.7 7.5"/>
</g>
<g fill="none" stroke="#2d9bd8" stroke-width="1.5"><circle cx="48.6" cy="5.6" r="4.8"/><path d="M52.2 9.2 L57.5 14.2" stroke-width="2"/><path d="M48.6 3.3 L48.6 7.9 M46.3 5.6 L50.9 5.6" stroke-width="1.1"/></g>
<path d="M68.5 14.3 L65.2 10.6 Q64.2 9.4 65.4 8.9 Q66.4 8.6 67.4 9.8 L67.4 3.2 Q67.4 2.2 68.4 2.2 Q69.4 2.2 69.4 3.2 L69.4 2 Q69.4 1 70.4 1 Q71.4 1 71.4 2 L71.4 1.8 Q71.4 0.8 72.4 0.8 Q73.4 0.8 73.4 1.8 L73.4 2.6 Q73.4 1.8 74.4 1.8 Q76.6 1.8 76.6 3 L76.6 11.5 Q76.6 14.3 73.8 14.3 Z" fill="#fdfdfb" stroke="#6e8192" stroke-width="1.05" stroke-linejoin="round"/>
<path d="M69.4 2.5 L69.4 7.5 M71.4 2 L71.4 7.5 M73.4 2.3 L73.4 7.5" stroke="#6e8192" stroke-width="1"/>
<path d="M95.7 0.4 L104.2 8.2 L101.8 8.2 L101.8 14.5 L98 14.5 L98 10.3 L93.4 10.3 L93.4 14.5 L89.6 14.5 L89.6 8.2 L87.2 8.2 Z" fill="#6e8192"/>
<path d="M108.1 3.4 L123.1 3.4 M108.1 7.6 L123.1 7.6 M108.1 12 L123.1 12" stroke="#6e8192" stroke-width="1.4"/>
</svg>
<div style="position:absolute;left:1847px;top:151px;width:60px;height:56px;background:#fdfdfb;border-radius:28px 4px 4px 28px;box-shadow:0 2px 10px rgba(0,0,0,0.07);"></div>
<svg style="position:absolute;left:1863px;top:165px;" width="28" height="28" viewBox="0 0 28 28"><circle cx="14" cy="14" r="7.3" fill="#a3dcf2"/><rect x="3" y="11.2" width="22" height="5.6" rx="2.545454545454545" fill="#a3dcf2" transform="rotate(0 14 14)"/><rect x="3" y="11.2" width="22" height="5.6" rx="2.545454545454545" fill="#a3dcf2" transform="rotate(60 14 14)"/><rect x="3" y="11.2" width="22" height="5.6" rx="2.545454545454545" fill="#a3dcf2" transform="rotate(120 14 14)"/><circle cx="14" cy="14" r="3.9" fill="#2a9fd6"/></svg>
<div style="position:absolute;left:1903px;top:0px;width:17px;height:1080px;background:#f1f1f1;"></div>
<div style="position:absolute;left:1905px;top:17px;width:13px;height:351px;background:#c1c1c1;"></div>
<svg style="position:absolute;left:1903px;top:0px;" width="17" height="17" viewBox="0 0 17 17"><path d="M4.5 10.5 L8.5 6.5 L12.5 10.5 Z" fill="#a3a3a3"/></svg>
<svg style="position:absolute;left:1903px;top:1063px;" width="17" height="17" viewBox="0 0 17 17"><path d="M4.5 5.8 L12.5 5.8 L8.5 10 Z" fill="#3a3a3a"/></svg>
<div style="position:absolute;left:1918px;top:370px;width:2px;height:17px;background:#111;"></div>
</body></html>
